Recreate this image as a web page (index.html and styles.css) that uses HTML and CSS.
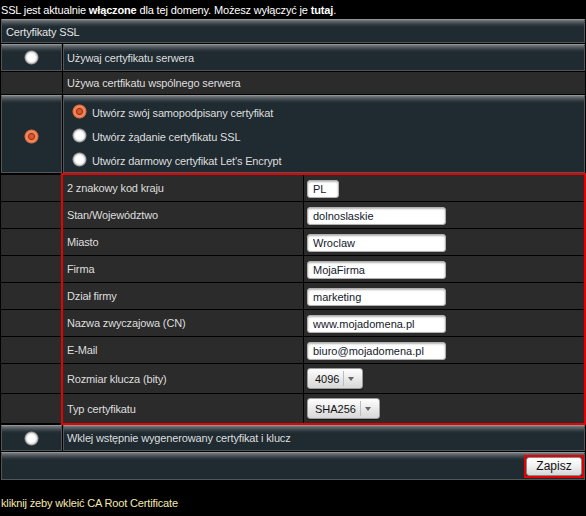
FILE: index.html
```html
<!DOCTYPE html>
<html lang="pl">
<head>
<meta charset="utf-8">
<title>Certyfikaty SSL</title>
<link rel="stylesheet" href="styles.css">
</head>
<body>
<p class="notice">SSL jest aktualnie <b>włączone</b> dla tej domeny. Możesz wyłączyć je <a class="link" href="#">tutaj</a>.</p>
<div class="panel">
  <div class="head">Certyfikaty SSL</div>
  <div class="row row-1">
    <div class="cell blue radio-cell"><span class="radio"></span></div>
    <div class="cell blue text-cell">Używaj certyfikatu serwera</div>
  </div>
  <div class="row row-2">
    <div class="cell gray"></div>
    <div class="cell gray text-cell">Używa certfikatu wspólnego serwera</div>
  </div>
  <div class="row row-3">
    <div class="cell blue radio-cell low"><span class="radio checked"></span></div>
    <div class="cell blue options">
      <div class="opt"><span class="radio checked"></span>Utwórz swój samopodpisany certyfikat</div>
      <div class="opt"><span class="radio"></span>Utwórz żądanie certyfikatu SSL</div>
      <div class="opt"><span class="radio"></span>Utwórz darmowy certyfikat Let's Encrypt</div>
    </div>
  </div>
  <div class="form-section">
    <div class="left-col">
      <div></div><div></div><div></div><div></div><div></div><div></div><div></div>
      <div class="tall"></div><div class="tall"></div>
    </div>
    <div class="fields">
      <div class="field"><div class="label">2 znakowy kod kraju</div><div class="value"><input class="inp short" type="text" value="PL"></div></div>
      <div class="field"><div class="label">Stan/Województwo</div><div class="value"><input class="inp" type="text" value="dolnoslaskie"></div></div>
      <div class="field"><div class="label">Miasto</div><div class="value"><input class="inp" type="text" value="Wroclaw"></div></div>
      <div class="field"><div class="label">Firma</div><div class="value"><input class="inp" type="text" value="MojaFirma"></div></div>
      <div class="field"><div class="label">Dział firmy</div><div class="value"><input class="inp" type="text" value="marketing"></div></div>
      <div class="field"><div class="label">Nazwa zwyczajowa (CN)</div><div class="value"><input class="inp" type="text" value="www.mojadomena.pl"></div></div>
      <div class="field"><div class="label">E-Mail</div><div class="value"><input class="inp" type="text" value="biuro@mojadomena.pl"></div></div>
      <div class="field tall"><div class="label">Rozmiar klucza (bity)</div><div class="value"><span class="select"><span class="val">4096</span><span class="arr"><span class="tri"></span></span></span></div></div>
      <div class="field tall"><div class="label">Typ certyfikatu</div><div class="value"><span class="select"><span class="val">SHA256</span><span class="arr"><span class="tri"></span></span></span></div></div>
    </div>
  </div>
  <div class="row row-w">
    <div class="cell blue radio-cell"><span class="radio"></span></div>
    <div class="cell blue text-cell">Wklej wstępnie wygenerowany certyfikat i klucz</div>
  </div>
  <div class="cell blue actions"><span class="save-wrap"><button class="save" type="button">Zapisz</button></span></div>
</div>
<p class="footnote">kliknij żeby wkleić CA Root Certificate</p>
</body>
</html>
```
FILE: styles.css
```css
html, body {
  margin: 0;
  background: #000;
}
body {
  width: 586px;
  color: #dedede;
  font-family: "Liberation Sans", Arial, sans-serif;
  font-size: 11px;
  letter-spacing: -0.15px;
}
.notice {
  margin: 0;
  padding: 2px 0 0 1px;
  height: 17px;
  line-height: 17px;
  color: #fff;
}
.notice b, .notice .link {
  font-weight: bold;
  color: #fff;
  text-decoration: none;
}
.panel {
  display: flex;
  flex-direction: column;
  gap: 1px;
  margin-left: 1px;
  width: 584px;
}
.head, .cell.blue {
  box-sizing: border-box;
  border: 1px solid #50565a;
  border-top-color: #8f9497;
  background: linear-gradient(#767b7f 0, #555c61 2px, #2e383e 5px, #1f2a31 7px);
}
.head {
  height: 24px;
  padding: 2px 0 0 4px;
  line-height: 20px;
  color: #e4e4e4;
}
.row {
  display: grid;
  grid-template-columns: 61px 1fr;
  gap: 1px;
}
.row-1 { height: 27px; }
.row-2 { height: 22px; }
.row-3 { height: 78px; }
.row-w { height: 26px; }
.cell.gray {
  background: #2b2b2b;
}
.text-cell {
  display: flex;
  align-items: center;
  padding-left: 4px;
}
.cell.blue.text-cell { padding-left: 3px; }
.radio-cell {
  display: flex;
  align-items: center;
  justify-content: center;
}
.radio-cell.low { padding-top: 5px; }
.radio {
  display: inline-block;
  width: 15px;
  height: 15px;
  border-radius: 50%;
  background: radial-gradient(circle closest-side, #fff 0, #fff 50%, #e4e4e4 68%, #9a9a9a 86%, rgba(80,80,80,0) 100%);
}
.radio.checked {
  background: radial-gradient(circle closest-side, #e2592a 0, #d4502a 28%, #8e341a 40%, #f07d4e 52%, #f58b5d 72%, #c8643f 88%, rgba(120,50,30,0) 100%);
}
.options {
  padding: 5px 0 0 8px;
  overflow: hidden;
}
.opt {
  display: flex;
  align-items: center;
  height: 24px;
  gap: 5px;
}
.opt .radio {
  margin-bottom: 4px;
}
.form-section {
  display: grid;
  grid-template-columns: 61px 1fr;
  gap: 1px;
  margin: 1px 0;
}
.left-col {
  display: flex;
  flex-direction: column;
  gap: 1px;
}
.left-col div {
  height: 26px;
  background: #2b2b2b;
}
.left-col div.tall { height: 29px; }
.fields {
  display: flex;
  flex-direction: column;
  gap: 1px;
  margin-right: 1px;
  outline: 2px solid #e60000;
  background: #000;
}
.field {
  display: grid;
  grid-template-columns: 240px 1fr;
  gap: 1px;
  height: 26px;
}
.field.tall { height: 29px; }
.field > div {
  display: flex;
  align-items: center;
  background: #2b2b2b;
}
.label {
  padding-left: 4px;
}
.value {
  padding-left: 3px;
}
.inp {
  box-sizing: border-box;
  width: 139px;
  height: 18px;
  margin: 1px 0 0;
  padding: 0 5px;
  border: 1px solid #b0b0b0;
  border-radius: 3px;
  background: #fff;
  box-shadow: inset 0 1px 2px rgba(0,0,0,0.3);
  color: #14192a;
  font-family: "Liberation Sans", Arial, sans-serif;
  font-size: 11px;
  letter-spacing: 0;
}
.inp.short { width: 32px; }
.select {
  display: inline-flex;
  align-items: stretch;
  box-sizing: border-box;
  height: 21px;
  border: 1px solid #9c9c9c;
  border-radius: 3px;
  background: linear-gradient(#fefefe, #e6e6e6 60%, #d8d8d8);
  box-shadow: 0 1px 1px rgba(0,0,0,0.45);
  color: #111;
  letter-spacing: 0;
}
.select .val {
  display: flex;
  align-items: center;
  padding: 0 4px 0 7px;
}
.select .arr {
  display: flex;
  align-items: center;
  box-sizing: border-box;
  width: 19px;
  margin: 2px 0;
  padding-left: 3px;
  border-left: 1px solid #bdbdbd;
}
.tri {
  width: 0;
  height: 0;
  border-style: solid;
  border-width: 4px 3px 0 3px;
  border-color: #666 transparent transparent transparent;
  margin-left: 1px;
}
.actions {
  height: 28px;
  display: flex;
  align-items: center;
  justify-content: flex-end;
}
.save-wrap {
  display: inline-flex;
  border: 2px solid #e60000;
}
.save {
  box-sizing: border-box;
  width: 56px;
  height: 19px;
  padding: 0;
  border: 1px solid #8a8a8a;
  border-radius: 3px;
  background: linear-gradient(#ffffff, #f0f0f0 50%, #d6d6d6);
  color: #111;
  font-family: "Liberation Sans", Arial, sans-serif;
  font-size: 12px;
  letter-spacing: 0;
}
.footnote {
  margin: 15px 0 0;
  padding-left: 1px;
  line-height: 17px;
  color: #f7e9b0;
}
```
